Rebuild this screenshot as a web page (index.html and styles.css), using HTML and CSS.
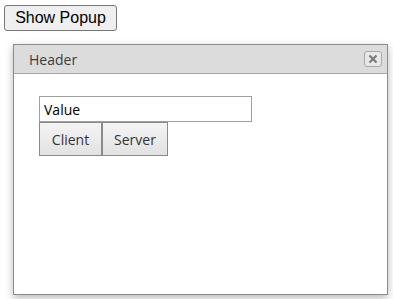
FILE: index.html
```html
<!DOCTYPE html>
<html lang="en">
<head>
    <meta charset="UTF-8">
    <meta name="viewport" content="width=device-width, initial-scale=1.0">
    <title>Popup Demo</title>
    <link rel="stylesheet" href="styles.css">
</head>
<body>
    <button class="show-btn">Show Popup</button>

    <!-- Всплывающее окно -->
    <div class="popup">
        <div class="popup-header">
            <span class="popup-title">Header</span>
            <button class="close-btn" aria-label="Close">
                <svg width="10" height="10" viewBox="0 0 10 10">
                    <path d="M1.5 1.5 L8.5 8.5 M8.5 1.5 L1.5 8.5" stroke="#7a7a7a" stroke-width="2.2" fill="none"/>
                </svg>
            </button>
        </div>
        <div class="popup-body">
            <input class="value-input" type="text" value="Value">
            <div class="actions">
                <button class="action-btn client">Client</button>
                <button class="action-btn">Server</button>
            </div>
        </div>
    </div>
</body>
</html>
```

FILE: styles.css
```css
body {
    margin: 0;
    padding: 5px 4px;
    background: #fff;
    font-family: "Open Sans", "Noto Sans", sans-serif;
}

.show-btn {
    display: block;
    width: 113px;
    height: 26px;
    padding: 0;
    font-family: "Liberation Sans", Arial, sans-serif;
    font-size: 16px;
    color: #000;
    background: #efefef;
    border: 1px solid #767676;
    border-radius: 3px;
}

.popup {
    margin: 13px 0 0 9px;
    width: 373px;
    height: 249px;
    border: 1px solid #8c8c8c;
    background: #fff;
    box-shadow: 0 3px 8px rgba(0, 0, 0, 0.28);
}

.popup-header {
    height: 28px;
    display: flex;
    align-items: center;
    justify-content: space-between;
    padding: 0 5px 0 15px;
    background: #dcdcdc;
    border-bottom: 1px solid #a8a8a8;
}

.popup-title {
    font-size: 14px;
    color: #3c3c3c;
}

.close-btn {
    width: 18px;
    height: 16px;
    padding: 0;
    display: flex;
    align-items: center;
    justify-content: center;
    background: #e8e8e8;
    border: 1px solid #a8a8a8;
    border-radius: 3px;
}

.popup-body {
    padding: 22px 0 0 25px;
}

.value-input {
    display: block;
    box-sizing: border-box;
    width: 213px;
    height: 26px;
    margin: 0;
    padding: 0 4px;
    font-family: "Open Sans", "Noto Sans", sans-serif;
    font-size: 14px;
    color: #000;
    border: 1px solid #a0a0a0;
    outline: none;
}

.actions {
    display: flex;
}

.action-btn {
    box-sizing: border-box;
    width: 66px;
    height: 34px;
    padding: 0;
    font-family: "Open Sans", "Noto Sans", sans-serif;
    font-size: 14px;
    color: #333;
    background: linear-gradient(#f4f4f4, #e2e2e2);
    border: 1px solid #8a8a8a;
}

.action-btn.client {
    width: 63px;
}
```
